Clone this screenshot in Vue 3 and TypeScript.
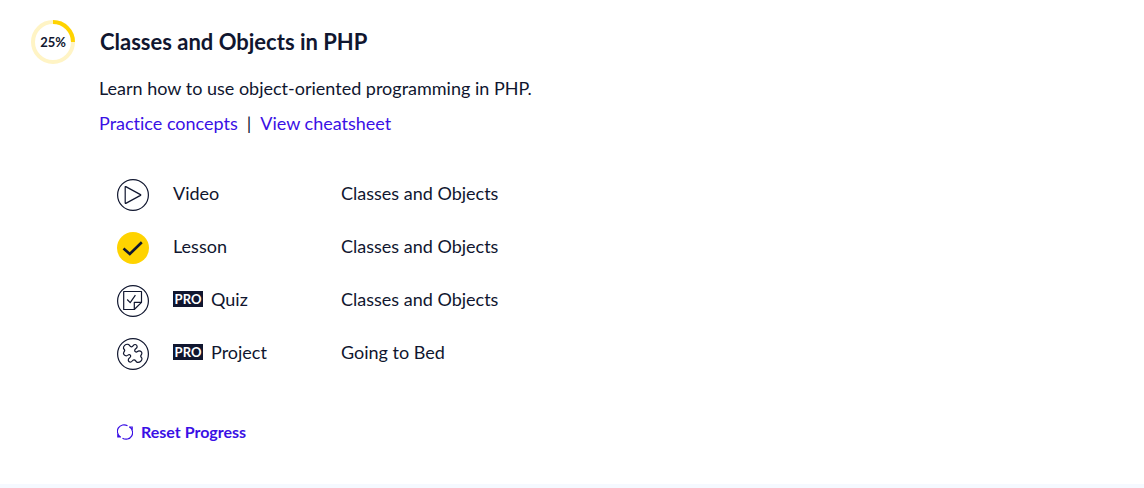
<script setup lang="ts">
type IconName = 'video' | 'done' | 'quiz' | 'project'

interface ContentItem {
  icon: IconName
  kind: string
  title: string
  pro: boolean
}

const items: ContentItem[] = [
  { icon: 'video', kind: 'Video', title: 'Classes and Objects', pro: false },
  { icon: 'done', kind: 'Lesson', title: 'Classes and Objects', pro: false },
  { icon: 'quiz', kind: 'Quiz', title: 'Classes and Objects', pro: true },
  { icon: 'project', kind: 'Project', title: 'Going to Bed', pro: true },
]

const progress = 25
</script>

<template>
  <main class="module">
    <header class="heading">
      <div class="progress">
        <svg class="ring" viewBox="0 0 44 44" aria-hidden="true">
          <circle class="track" cx="22" cy="22" r="20" />
          <circle
            class="value"
            cx="22"
            cy="22"
            r="20"
            pathLength="100"
            :stroke-dasharray="`${progress} 100`"
            transform="rotate(-90 22 22)"
          />
        </svg>
        <span class="percent">{{ progress }}%</span>
      </div>
      <h2>Classes and Objects in PHP</h2>
    </header>

    <section class="details">
      <p class="description">Learn how to use object-oriented programming in PHP.</p>
      <nav class="links">
        <a href="#practice">Practice concepts</a>
        <span class="divider">|</span>
        <a href="#cheatsheet">View cheatsheet</a>
      </nav>

      <ul class="items">
        <li v-for="item in items" :key="item.kind" class="item">
          <svg class="icon" viewBox="0 0 32 32" aria-hidden="true">
            <circle v-if="item.icon === 'done'" class="disc" cx="16" cy="16" r="16" />
            <circle v-else class="line" cx="16" cy="16" r="15.4" />
            <path v-if="item.icon === 'video'" class="line" d="M8.200 7.900v16.200q0 .6.6.3L23.500 16.400q.6-.4 0-.8L8.800 7.600q-.6-.3-.6.3z" />
            <path v-if="item.icon === 'done'" class="tick" d="M6.500 16.500l6.300 5.500L24.800 10.200" />
            <template v-if="item.icon === 'quiz'">
              <path class="line" d="M6.700 6.500h17.800v10.800l-7.200 7.200H6.700z" />
              <path class="line" d="M17.300 24.500v-7.200h7.200" />
              <path class="line" d="M10.200 14.500l3 3.200 5.200-7.500" />
            </template>
            <path
              v-if="item.icon === 'project'"
              class="line"
              d="M6.500 10.500C6 8 8.500 6 11 6.300C13 6.600 12.500 9 14.500 8.800C16.500 8.600 16 6.300 18.300 6.500C20.600 6.800 20.600 9.500 19 10.600C17.400 11.700 17.300 13 18.500 13.800C20 14.800 20.500 12.800 22 12.800C24 12.800 25.600 14.800 24.600 16.300C23.800 17.500 22.600 18 24.900 20.100C25.400 22.600 22.900 24.600 20.400 24.300C18.400 24 18.900 21.600 16.900 21.800C14.900 22 15.400 24.300 13.100 24.100C10.800 23.800 10.800 21.100 12.400 20C14 18.900 14.100 17.600 12.900 16.800C11.400 15.800 10.900 17.800 9.400 17.800C7.400 17.800 5.800 15.800 6.800 14.300C7.600 13.100 8.800 12.600 6.500 10.500z"
            />
          </svg>
          <span class="kind">
            <span v-if="item.pro" class="pro">PRO</span>
            <span>{{ item.kind }}</span>
          </span>
          <span class="title">{{ item.title }}</span>
        </li>
      </ul>

      <button class="reset" type="button">
        <svg viewBox="0 0 16 16" aria-hidden="true">
          <path d="M3.500 13A6.600 6.600 0 0 1 10.500 1.800M12.500 3A6.600 6.600 0 0 1 5.500 14.200M.8 10v3h3.200M15.200 6V3H12" />
        </svg>
        <span>Reset Progress</span>
      </button>
    </section>
  </main>
</template>

<style>
body {
  margin: 0;
  background: #fff;
}
</style>

<style scoped>
.module {
  padding: 20px 31px 40px;
  border-bottom: 4px solid #f5f9ff;
  color: #10162f;
  font-family: Lato, "Liberation Sans", sans-serif;
  font-size: 18px;
  font-variant-ligatures: none;
  line-height: 24px;
}
.heading {
  display: flex;
  align-items: center;
  gap: 25px;
}
.progress {
  display: grid;
  place-items: center;
  width: 44px;
  height: 44px;
}
.ring,
.percent {
  grid-area: 1 / 1;
}
.ring {
  width: 44px;
  height: 44px;
  fill: none;
  stroke-width: 4;
}
.track {
  stroke: #fff4c5;
}
.value {
  stroke: #ffd300;
}
.percent {
  font-size: 13px;
  font-weight: 700;
  line-height: 16px;
}
h2 {
  margin: 0;
  font-size: 22px;
  line-height: 28px;
}
.details {
  padding-left: 68px;
}
.description {
  margin: 12px 0 11px;
}
.links {
  display: flex;
  gap: 9px;
}
.links a {
  color: #3a10e5;
  text-decoration: none;
}
.items {
  margin: 33px 0 0;
  padding: 0 0 0 18px;
  list-style: none;
}
.item {
  display: grid;
  grid-template-columns: 32px 144px 1fr;
  column-gap: 24px;
  align-items: center;
  height: 53px;
}
.icon {
  width: 32px;
  height: 32px;
}
.line {
  fill: none;
  stroke: #10162f;
  stroke-width: 1.2;
  stroke-linejoin: round;
}
.disc {
  fill: #ffd300;
}
.tick {
  fill: none;
  stroke: #10162f;
  stroke-width: 2.6;
}
.kind,
.title {
  padding-bottom: 4px;
}
.kind {
  display: flex;
  align-items: center;
  gap: 8px;
}
.pro {
  width: 30px;
  background: #10162f;
  color: #fff;
  font-size: 13px;
  font-weight: 700;
  line-height: 16px;
  text-align: center;
}
.reset {
  display: flex;
  align-items: center;
  gap: 8px;
  margin: 40px 0 0 18px;
  padding: 0;
  border: 0;
  background: none;
  color: #3a10e5;
  font: inherit;
  font-size: 16px;
  font-weight: 700;
  cursor: pointer;
}
.reset svg {
  width: 16px;
  height: 16px;
  fill: none;
  stroke: currentColor;
  stroke-width: 1.2;
}
</style>
